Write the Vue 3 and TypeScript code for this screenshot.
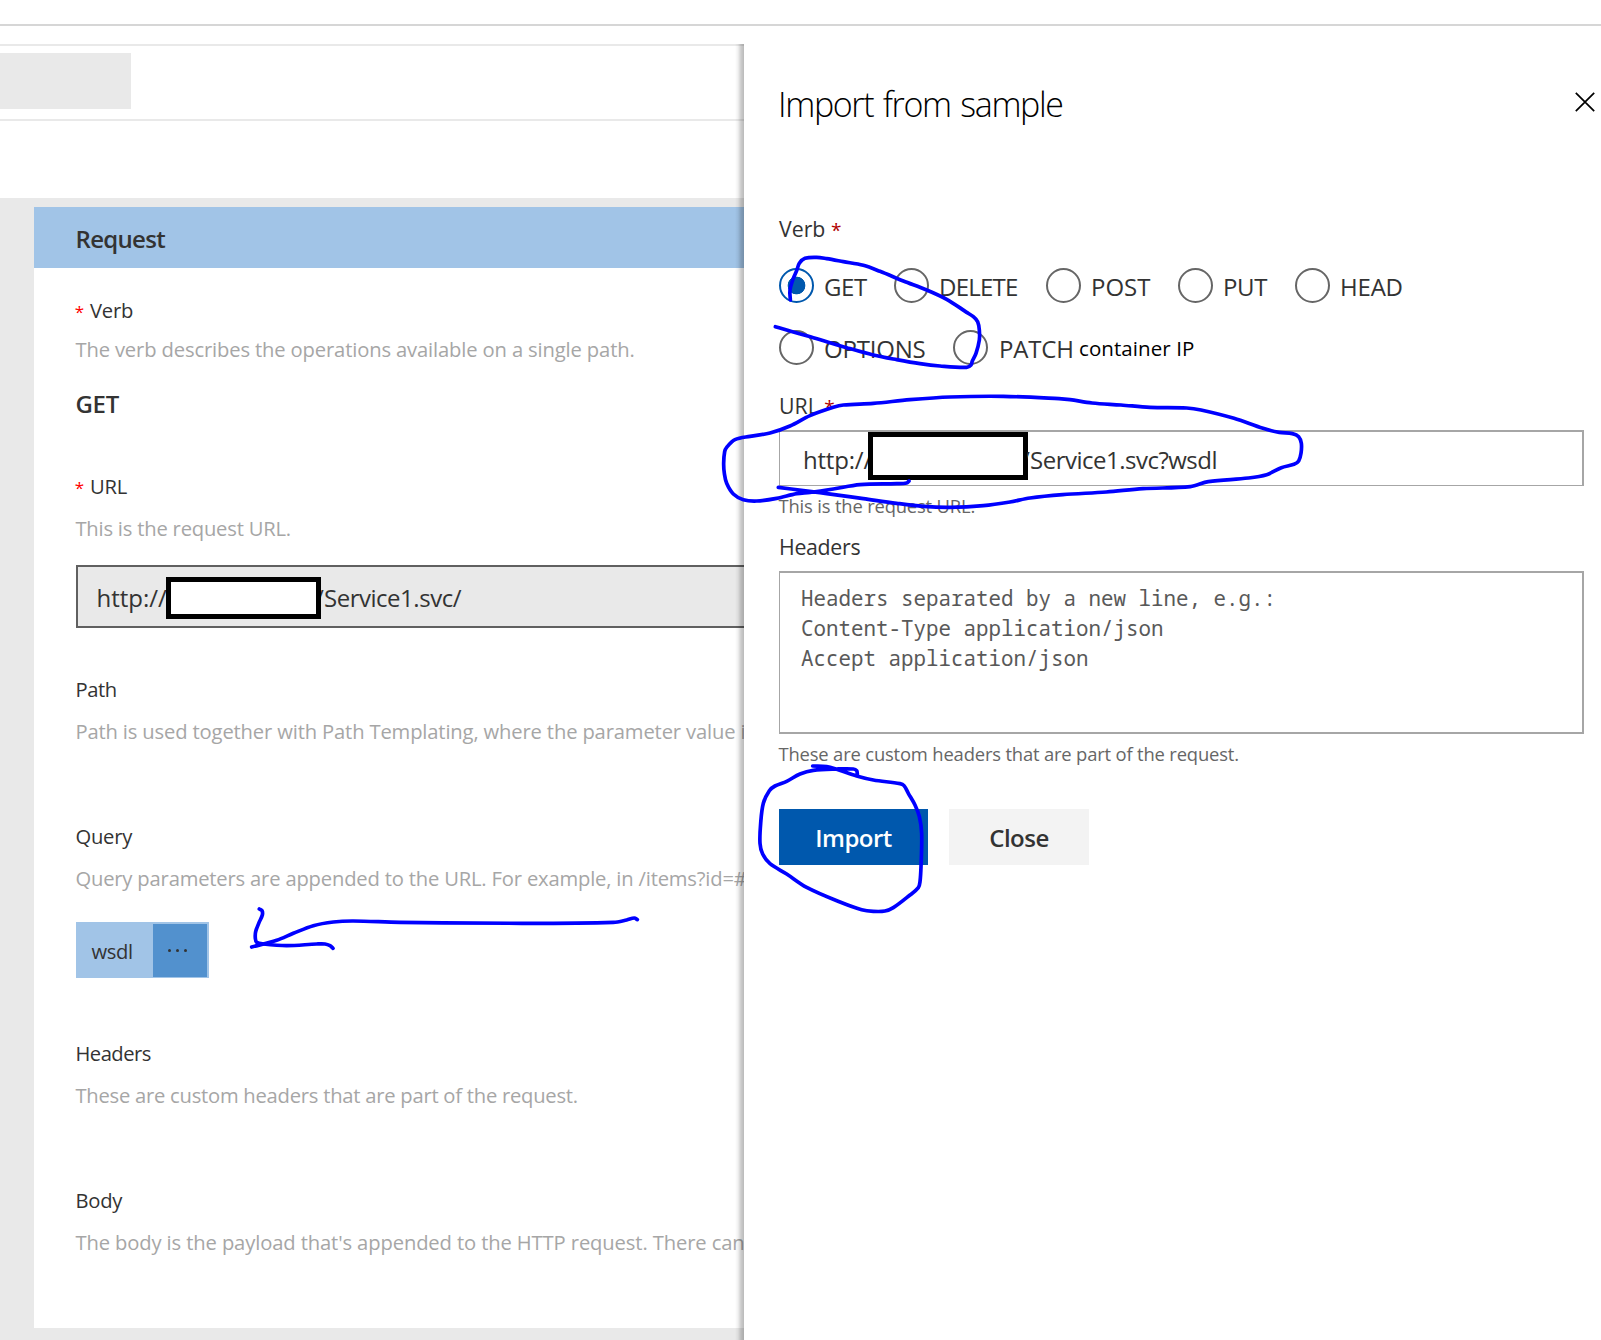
<script setup lang="ts">
import { ref } from 'vue'

interface Stroke {
  origin: [number, number]
  points: [number, number][]
}

const row1 = [
  { name: 'GET', cls: 'v-get' },
  { name: 'DELETE', cls: 'v-delete' },
  { name: 'POST', cls: 'v-post' },
  { name: 'PUT', cls: 'v-put' },
  { name: 'HEAD', cls: 'v-head' },
]
const row2 = [
  { name: 'OPTIONS', cls: 'v-options' },
  { name: 'PATCH', cls: 'v-patch' },
]
const verbRows = [row1, row2]
const selected = ref('GET')

const placeholder = 'Headers separated by a new line, e.g.:\nContent-Type application/json\nAccept application/json'

// Pen strokes, sampled at three units per pixel from each origin
const strokes: Stroke[] = [
  { origin: [740, 240], points: [[151, 180], [150, 150], [160, 115], [170, 92], [178, 70], [195, 55], [230, 52], [260, 56], [310, 65], [370, 76], [420, 94], [490, 123], [560, 150], [620, 178], [680, 217], [700, 230], [713, 245], [718, 270], [718, 300], [708, 340], [697, 363], [693, 375], [680, 382], [600, 378], [540, 371], [470, 359], [400, 345], [320, 323], [220, 293], [150, 273], [106, 260]] },
  { origin: [710, 380], points: [[597, 303], [590, 309], [560, 311], [450, 314], [370, 327], [300, 337], [260, 341], [200, 355], [140, 363], [100, 359], [70, 342], [50, 310], [43, 280], [41, 250], [44, 215], [50, 202], [75, 179], [120, 169], [180, 159], [240, 138], [300, 107], [370, 82], [400, 75], [490, 70], [600, 59], [720, 51], [880, 49], [1047, 56], [1080, 59], [1146, 69], [1233, 75], [1320, 82], [1430, 84], [1473, 90], [1572, 115], [1659, 145], [1708, 157], [1747, 161], [1766, 170], [1774, 190], [1773, 220], [1766, 243], [1752, 253], [1714, 263], [1670, 284], [1615, 294], [1495, 305], [1441, 320], [1299, 326], [1189, 336], [1058, 344], [960, 354], [900, 366], [820, 377], [720, 382], [640, 379], [560, 370], [460, 356], [330, 338], [205, 322]] },
  { origin: [740, 750], points: [[218, 48], [260, 50], [290, 58], [350, 78], [400, 90], [480, 101], [492, 107], [505, 130], [525, 165], [538, 200], [545, 250], [543, 350], [540, 395], [535, 413], [510, 435], [460, 473], [435, 483], [400, 484], [365, 479], [300, 456], [200, 412], [140, 372], [90, 341], [68, 312], [60, 280], [62, 220], [70, 160], [88, 122], [105, 108], [140, 94], [180, 72], [220, 61], [290, 57], [340, 57], [350, 62], [352, 72]] },
  { origin: [0, 640], points: [[778, 807], [786, 812], [787, 825], [777, 848], [767, 875], [766, 895], [770, 907], [790, 912], [860, 917], [950, 912], [975, 912], [990, 917], [999, 925]] },
  { origin: [0, 640], points: [[755, 921], [830, 901], [880, 880], [940, 857], [1000, 846], [1060, 843], [1200, 847], [1580, 850], [1840, 847], [1880, 840], [1903, 834], [1912, 839]] },
]

// Catmull-Rom spline through the sampled points
function toPath({ origin, points }: Stroke): string {
  const p = points.map(([x, y]) => [origin[0] + x / 3, origin[1] + y / 3])
  let d = `M${p[0][0]} ${p[0][1]}`
  for (let i = 0; i < p.length - 1; i++) {
    const a = p[Math.max(i - 1, 0)]
    const b = p[i]
    const c = p[i + 1]
    const e = p[Math.min(i + 2, p.length - 1)]
    // Limit the handles so uneven sampling does not overshoot
    const len = Math.hypot(c[0] - b[0], c[1] - b[1])
    const handle = (u: number[], v: number[]) => {
      const dx = v[0] - u[0]
      const dy = v[1] - u[1]
      const k = len / 3 / (Math.hypot(dx, dy) || 1)
      return [dx * k, dy * k]
    }
    const h1 = handle(a, c)
    const h2 = handle(b, e)
    d += `C${b[0] + h1[0]} ${b[1] + h1[1]} ${c[0] - h2[0]} ${c[1] - h2[1]} ${c[0]} ${c[1]}`
  }
  return d
}
const paths = strokes.map(toPath)
</script>

<template>
  <div class="page">
    <div class="topbar"></div>
    <div class="body">
      <main class="designer">
        <div class="toolbar"><div class="tab"></div></div>
        <div class="spacer"></div>
        <div class="canvas">
          <section class="card">
            <h2 class="card-title">Request</h2>
            <div class="card-body">
              <div class="label verb"><span class="req">*</span>Verb</div>
              <div class="desc d-verb">The verb describes the operations available on a single path.</div>
              <div class="value">GET</div>
              <div class="label url"><span class="req">*</span>URL</div>
              <div class="desc d-url">This is the request URL.</div>
              <div class="url-box">
                <span class="scheme">http://</span><span class="redacted"></span><span class="rest"><i class="slash">/</i>Service1.svc/</span>
              </div>
              <div class="label path">Path</div>
              <div class="desc d-path">Path is used together with Path Templating, where the parameter value i</div>
              <div class="label query">Query</div>
              <div class="desc d-query">Query parameters are appended to the URL. For example, in /items?id=#</div>
              <div class="tag">
                <span class="tag-name">wsdl</span>
                <span class="tag-menu"><i></i><i></i><i></i></span>
              </div>
              <div class="label headers">Headers</div>
              <div class="desc d-headers">These are custom headers that are part of the request.</div>
              <div class="label body-label">Body</div>
              <div class="desc d-body">The body is the payload that's appended to the HTTP request. There can</div>
            </div>
          </section>
        </div>
      </main>

      <aside class="panel">
        <header class="panel-head">
          <h1>Import from sample</h1>
          <svg class="close" width="20" height="20" viewBox="0 0 20 20"><path d="M.8.8l18.4 18.4M19.2.8L.8 19.2" fill="none" stroke="#000" stroke-width="1.7" /></svg>
        </header>
        <div class="field-label p-verb">Verb <span class="star">*</span></div>
        <div v-for="(row, r) in verbRows" :key="r" class="radios">
          <label v-for="v in row" :key="v.name" class="radio" :class="[v.cls, { on: v.name === selected }]" @click="selected = v.name">
            <span class="dot"></span><span class="radio-text">{{ v.name }}</span>
          </label>
        </div>
        <div class="field-label p-url">URL <span class="star">*</span></div>
        <div class="input">
          <span class="scheme">http://</span><span class="redacted"></span><span class="rest"><i class="slash">/</i>Service1.svc?wsdl</span>
        </div>
        <div class="hint h-url">This is the request URL.</div>
        <div class="field-label p-headers">Headers</div>
        <div class="textarea">{{ placeholder }}</div>
        <div class="hint h-headers">These are custom headers that are part of the request.</div>
        <div class="buttons">
          <button class="btn primary">Import</button>
          <button class="btn plain">Close</button>
        </div>
      </aside>
    </div>

    <span class="note">container IP</span>
    <svg class="ink" width="1601" height="1340" viewBox="0 0 1601 1340">
      <path v-for="(d, i) in paths" :key="i" :d="d" />
    </svg>
  </div>
</template>

<style>
body {
  margin: 0;
  background: #fff;
}
</style>

<style scoped>
* {
  box-sizing: border-box;
}
.page {
  position: relative;
  display: flex;
  flex-direction: column;
  width: 1601px;
  height: 1340px;
  overflow: hidden;
  background: #fff;
  color: #333;
  font-family: "Open Sans", "Noto Sans", sans-serif;
  white-space: nowrap;
}
i {
  font-style: normal;
}
.topbar {
  flex: none;
  height: 26px;
  border-bottom: 2px solid #d6d6d6;
  margin-bottom: 18px;
}
.body {
  flex: 1;
  display: flex;
  min-height: 0;
  overflow: hidden;
}

.designer {
  width: 744px;
  flex: none;
  overflow: hidden;
  display: flex;
  flex-direction: column;
}
.toolbar {
  height: 77px;
  flex: none;
  border-top: 2px solid #e9e9e9;
  border-bottom: 2px solid #e9e9e9;
  padding-top: 7px;
}
.tab {
  width: 131px;
  height: 56px;
  background: #e9e9e9;
}
.spacer {
  height: 77px;
  flex: none;
}
.canvas {
  flex: 1;
  background: #e9e9e9;
  padding: 9px 0 12px 34px;
}
.card {
  height: 1121px;
  background: #fff;
  overflow: hidden;
}
.card-title {
  margin: 0;
  height: 61px;
  padding-left: 41.5px;
  background: #a1c4e7;
  font-size: 24px;
  font-weight: 600;
  line-height: 63px;
  letter-spacing: -0.69px;
}
.card-body {
  padding-left: 42px;
}
.label,
.desc {
  height: 30px;
  line-height: 30px;
  font-size: 20.2px;
  text-indent: -0.6px;
}
.label {
  letter-spacing: -0.2px;
}
.desc {
  color: #a6a6a6;
  letter-spacing: -0.14px;
}
.req {
  display: inline-block;
  width: 14.5px;
  color: #f00;
  font-size: 17px;
}
.verb {
  margin-top: 27px;
}
.d-verb {
  margin-top: 9px;
}
.value {
  margin-top: 25px;
  height: 30px;
  line-height: 30px;
  font-size: 24px;
  font-weight: 600;
  letter-spacing: -0.3px;
  text-indent: -0.5px;
}
.url {
  margin-top: 52px;
}
.d-url {
  margin-top: 12px;
  letter-spacing: -0.2px;
}
.url-box {
  display: flex;
  align-items: center;
  margin-top: 22px;
  height: 63px;
  width: 800px;
  border: 2px solid #606060;
  background: #e9e9e9;
  padding-left: 18.5px;
  font-size: 24px;
}
.url-box .scheme {
  width: 69.5px;
  padding-top: 2px;
  line-height: 65px;
}
.redacted {
  flex: none;
  border: 5px solid #000;
  background: #fff;
}
.url-box .redacted {
  width: 155px;
  height: 42px;
  margin-top: 3px;
  position: relative;
}
.url-box .rest {
  padding-top: 2px;
  line-height: 65px;
  margin-left: -6px;
  letter-spacing: -0.48px;
}
.slash {
  display: inline-block;
  width: 9px;
  clip-path: inset(0 0 0 6px);
}
.path {
  margin-top: 46px;
  letter-spacing: -0.4px;
}
.d-path,
.d-query,
.d-headers,
.d-body {
  margin-top: 12px;
}
.d-path {
  letter-spacing: -0.15px;
}
.d-query {
  letter-spacing: -0.18px;
}
.d-headers {
  letter-spacing: -0.24px;
}
.d-body {
  letter-spacing: -0.12px;
}
.query {
  margin-top: 75px;
}
.tag {
  display: flex;
  justify-content: space-between;
  width: 133px;
  height: 56px;
  margin-top: 29px;
  padding: 2px 2px 1px 15.5px;
  background: #a1c4e7;
}
.tag-name {
  font-size: 20.2px;
  line-height: 54px;
  letter-spacing: -0.4px;
}
.tag-menu {
  display: flex;
  justify-content: center;
  gap: 5px;
  width: 54px;
  padding: 25px 6px 0 0;
  background: #5291ce;
}
.tag-menu i {
  width: 3px;
  height: 3px;
  border-radius: 50%;
  background: #333;
}
.headers {
  margin-top: 60px;
  letter-spacing: -0.5px;
}
.body-label {
  margin-top: 75px;
}

.panel {
  flex: 1;
  position: relative;
  padding: 0 17px 0 35px;
  background: #fff;
}
.panel::before {
  content: "";
  position: absolute;
  top: 0;
  bottom: 0;
  left: -9px;
  width: 9px;
  background: linear-gradient(to left, rgba(0, 0, 0, 0.27), rgba(0, 0, 0, 0.2) 3px, rgba(0, 0, 0, 0.06) 6px, transparent);
}
.panel-head {
  display: flex;
  justify-content: space-between;
  margin-right: -12px;
  height: 171px;
}
h1 {
  margin: 35px 0 0 -1px;
  height: 50px;
  color: #000;
  font-size: 34px;
  font-weight: 300;
  line-height: 50px;
  letter-spacing: -1.35px;
  word-spacing: 2px;
}
.close {
  margin: 48px 1px 0 0;
}
.field-label {
  height: 30px;
  line-height: 30px;
  font-size: 21.3px;
}
.p-verb {
  margin-top: -1px;
  margin-bottom: 24px;
}
.star {
  color: #b00000;
  font-size: 19px;
}
.radios {
  display: flex;
  height: 35px;
  margin-bottom: 27px;
}
.radio {
  display: flex;
  align-items: center;
  gap: 10px;
  height: 35px;
}
.dot {
  flex: none;
  width: 35px;
  height: 35px;
  border: 2px solid #666;
  border-radius: 50%;
}
.on .dot {
  border-color: #0058ad;
  background: radial-gradient(circle, #0058ad 8.5px, transparent 9.2px);
}
.radio-text {
  padding-top: 2px;
  font-size: 24px;
  line-height: 37px;
  letter-spacing: -0.4px;
}
.v-get {
  width: 115px;
}
.v-delete {
  width: 152px;
}
.v-delete .radio-text {
  letter-spacing: -0.75px;
}
.v-post {
  width: 132px;
}
.v-post .radio-text {
  letter-spacing: 0;
}
.v-put {
  width: 117px;
}
.v-head .radio-text {
  letter-spacing: -0.2px;
}
.v-options {
  width: 174px;
}
.v-options .radio-text {
  letter-spacing: -0.2px;
}
.v-patch .radio-text {
  padding-left: 1px;
  letter-spacing: -0.2px;
}
.p-url {
  margin-top: -1px;
}
.input {
  display: flex;
  width: 805px;
  height: 56px;
  margin-top: 9px;
  border: 2px solid #a6a6a6;
  border-left-width: 1px;
  border-bottom-width: 1px;
  padding-left: 23px;
  font-size: 24px;
}
.input .scheme {
  width: 65px;
  line-height: 55px;
  letter-spacing: -0.2px;
}
.input .redacted {
  width: 160px;
  height: 48px;
  position: relative;
}
.input .rest {
  margin-left: -7px;
  line-height: 55px;
  letter-spacing: -0.5px;
}
.hint {
  height: 28px;
  line-height: 28px;
  color: #666;
  font-size: 18.4px;
  letter-spacing: -0.17px;
  text-indent: -0.5px;
}
.h-url {
  margin-top: 6px;
}
.p-headers {
  margin-top: 12px;
  letter-spacing: -0.3px;
}
.textarea {
  width: 805px;
  height: 163px;
  margin-top: 9px;
  padding: 10px 21px;
  border: 2px solid #a6a6a6;
  border-left-width: 1px;
  color: #595959;
  font: 20.83px/30px "Noto Sans Mono", "DejaVu Sans Mono", monospace;
  white-space: pre;
}
.h-headers {
  margin-top: 6px;
}
.buttons {
  display: flex;
  gap: 21px;
  margin-top: 41px;
}
.btn {
  height: 56px;
  padding: 0 0 2px;
  border: 0;
  font: 600 24px/58px "Open Sans", sans-serif;
  letter-spacing: -0.5px;
}
.primary {
  width: 149px;
  background: #0058ad;
  color: #fff;
}
.plain {
  width: 140px;
  background: #f3f3f3;
  color: #333;
}

.note {
  position: absolute;
  left: 1079px;
  top: 334px;
  color: #000;
  font-size: 20.5px;
  line-height: 28px;
  letter-spacing: 0.08px;
}
.ink {
  position: absolute;
  left: 0;
  top: 0;
  pointer-events: none;
}
.ink path {
  fill: none;
  stroke: #00f;
  stroke-width: 3.7;
  stroke-linecap: round;
  stroke-linejoin: round;
}
</style>
